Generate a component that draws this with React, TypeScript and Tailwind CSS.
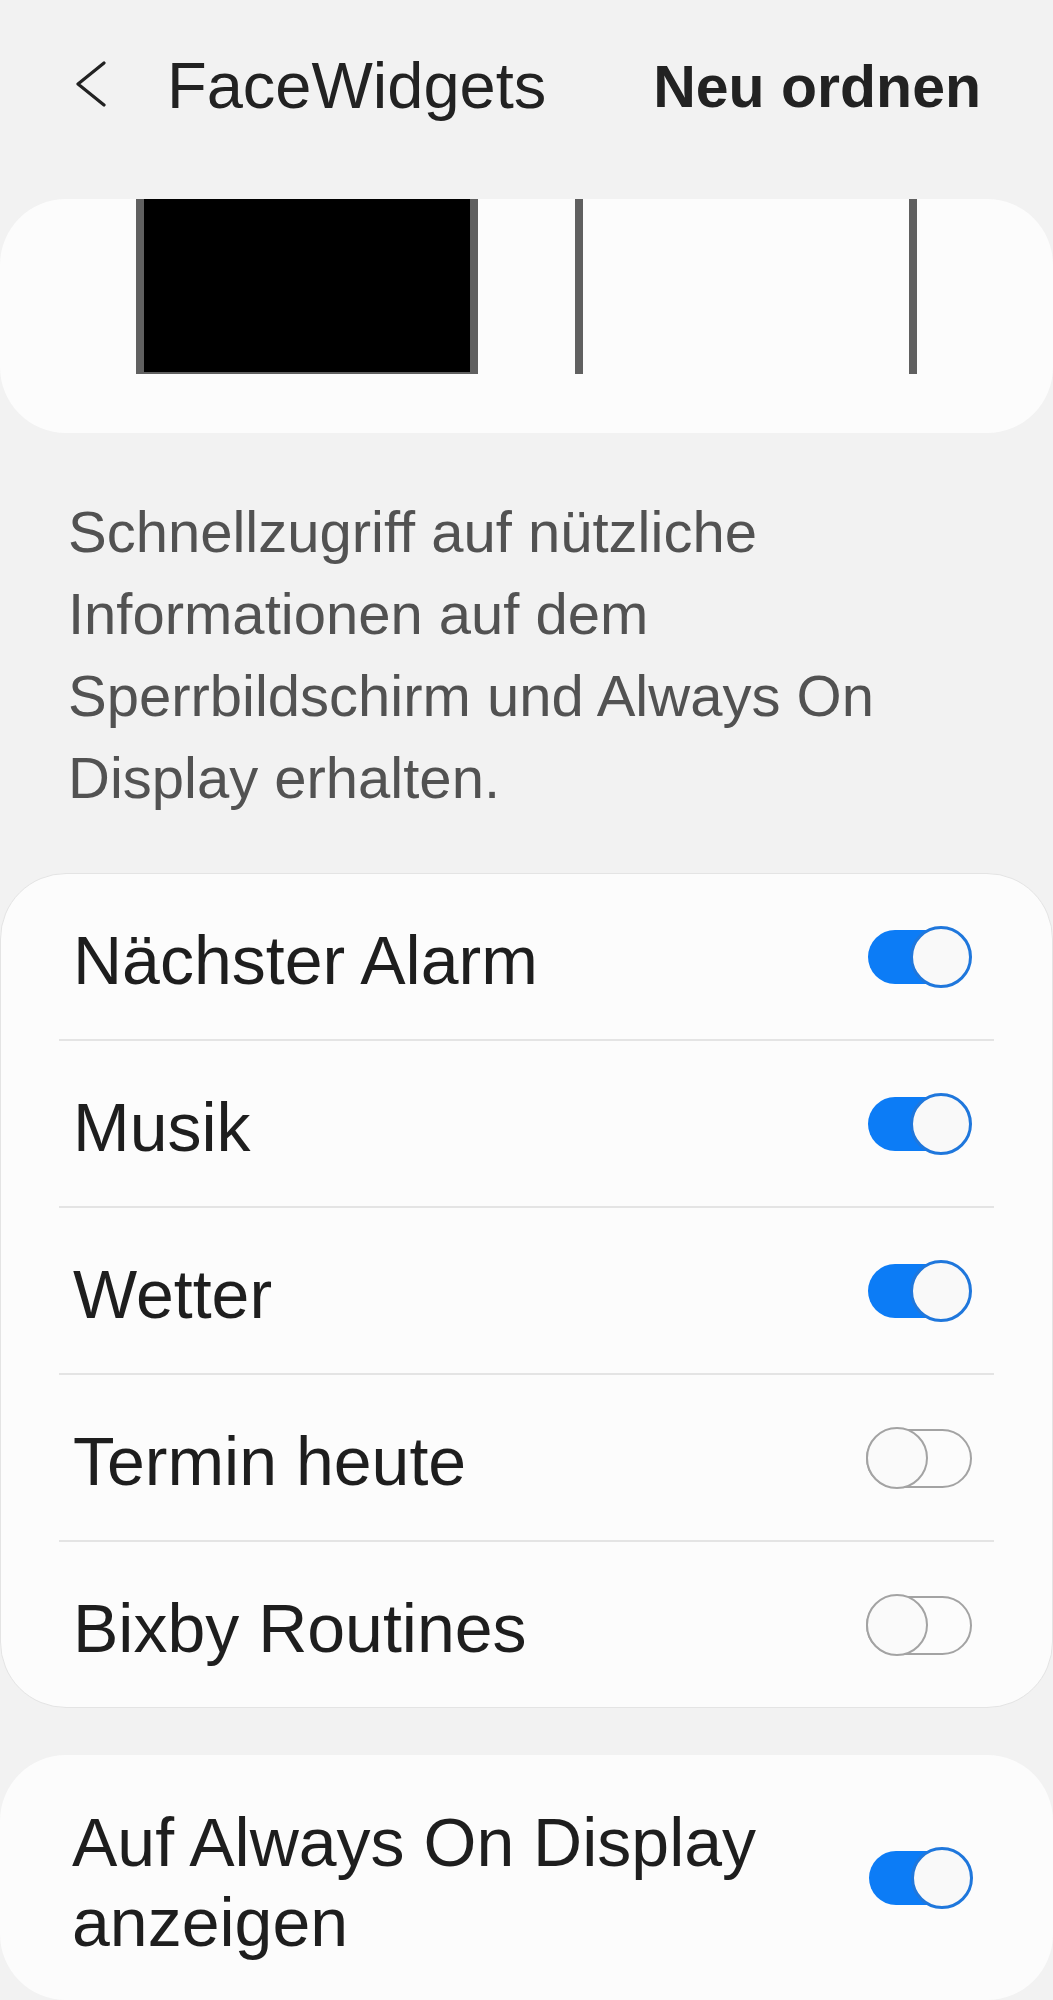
import React from "react";

function Toggle({ on }: { on: boolean }) {
  if (on) {
    return (
      <div className="relative w-[104px] h-[62px] shrink-0">
        <div className="absolute left-0 top-[4px] w-[92px] h-[54px] rounded-full bg-[#0c7cf6]" />
        <div className="absolute right-0 top-0 w-[62px] h-[62px] rounded-full bg-[#f9f9f9] border-[3px] border-[#1f77dc]" />
      </div>
    );
  }
  return (
    <div className="relative w-[106px] h-[62px] shrink-0">
      <div className="absolute left-0 top-[2px] w-[106px] h-[59px] rounded-full border-[2.5px] border-[#a3a3a3]" />
      <div className="absolute left-0 top-0 w-[62px] h-[62px] rounded-full bg-[#fafafa] border-[2.5px] border-[#a3a3a3]" />
    </div>
  );
}

function Row({ label, on }: { label: string; on: boolean }) {
  return (
    <div className="flex items-center h-[165px] pl-[72px] pr-[80px]">
      <span className="mt-[6px] text-[68px] leading-[68px] text-[#1e1e1e]">{label}</span>
      <div className="ml-auto">
        <Toggle on={on} />
      </div>
    </div>
  );
}

export default function App() {
  const rows = [
    { label: "Nächster Alarm", on: true },
    { label: "Musik", on: true },
    { label: "Wetter", on: true },
    { label: "Termin heute", on: false },
    { label: "Bixby Routines", on: false },
  ];
  return (
    <div
      className="w-[1053px] min-h-[2000px] bg-[#f2f2f2] overflow-hidden"
      style={{ fontFamily: '"Liberation Sans", Arial, sans-serif' }}
    >
      {/* Header */}
      <div className="flex items-start h-[199px] pt-[53px] pl-[74px] pr-[72px]">
        <svg className="mt-[8px]" width="34" height="46" viewBox="0 0 34 46" fill="none">
          <polyline
            points="30,2 4,23 30,44"
            stroke="#222222"
            strokeWidth="3.2"
            strokeLinecap="round"
            strokeLinejoin="round"
          />
        </svg>
        <span className="ml-[59px] text-[65px] leading-[65px] text-[#222222]">FaceWidgets</span>
        <span className="ml-auto mt-[2px] text-[59px] leading-[65px] font-bold text-[#222222]">
          Neu ordnen
        </span>
      </div>

      {/* Preview card */}
      <div className="h-[234px] rounded-[66px] bg-[#fcfcfc] overflow-hidden flex items-start pl-[136px]">
        <div className="w-[342px] h-[175px] bg-black border-x-[8px] border-b-[2px] border-[#606060]" />
        <div className="ml-[97px] w-[8px] h-[175px] bg-[#606060]" />
        <div className="ml-[326px] w-[8px] h-[175px] bg-[#606060]" />
      </div>

      {/* Description */}
      <div className="mt-[58px] pl-[68px] text-[58px] leading-[82px] text-[#525252]">
        Schnellzugriff auf nützliche
        <br />
        Informationen auf dem
        <br />
        Sperrbildschirm und Always On
        <br />
        Display erhalten.
      </div>

      {/* Toggle card */}
      <div className="mt-[54px] rounded-[66px] bg-[#fcfcfc] border border-[#e4e4e4]">
        {rows.map((r, i) => (
          <div key={r.label}>
            {i > 0 && <div className="mx-[58px] h-[2px] bg-[#e4e4e4]" />}
            <Row label={r.label} on={r.on} />
          </div>
        ))}
      </div>

      {/* AOD card */}
      <div className="mt-[47px] h-[245px] rounded-[66px] bg-[#fcfcfc] flex items-center pl-[72px] pr-[80px]">
        <span className="mt-[8px] w-[760px] text-[68px] leading-[80px] text-[#1e1e1e]">
          Auf Always On Display anzeigen
        </span>
        <div className="ml-auto">
          <Toggle on={true} />
        </div>
      </div>
    </div>
  );
}
